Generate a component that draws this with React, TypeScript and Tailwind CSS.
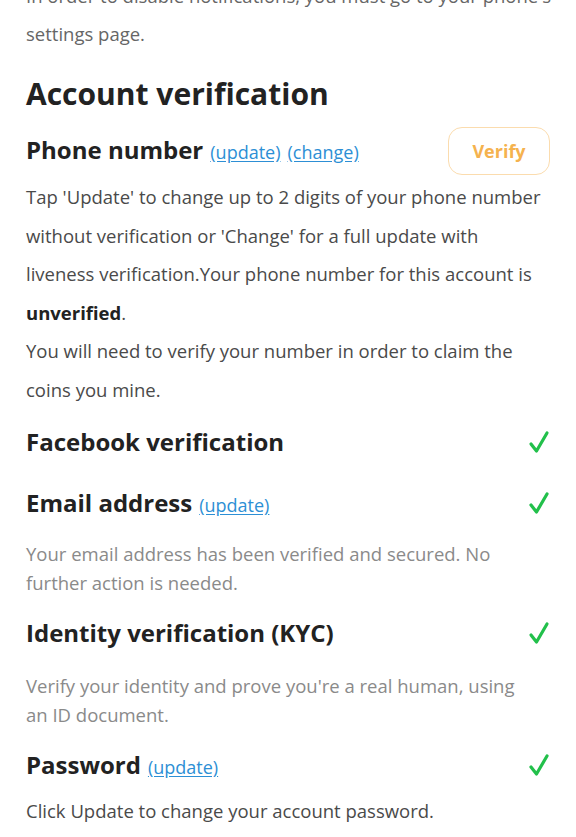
import React from 'react';

const font = { fontFamily: '"Open Sans", "Noto Sans", sans-serif' };

const Check: React.FC = () => (
  <svg width="22" height="24" viewBox="0 0 22 24" className="shrink-0">
    <path d="M3 14 L8.5 21 L19 3" fill="none" stroke="#22c04b" strokeWidth="3.2" strokeLinecap="round" strokeLinejoin="round" />
  </svg>
);

const Link: React.FC<{ children: React.ReactNode }> = ({ children }) => (
  <a href="#" className="text-[18px] font-normal text-[#2d8fd5] underline underline-offset-2">
    {children}
  </a>
);

const App: React.FC = () => {
  return (
    <div className="bg-white w-[576px] h-[837px] overflow-hidden" style={font}>
      <div className="px-[26px]">
        {/* intro paragraph, cut off at top */}
        <p className="mt-[-23px] text-[18.5px] leading-[38px] text-[#666] whitespace-nowrap">
          In order to disable notifications, you must go to your phone's
          <br />
          settings page.
        </p>

        <h1 className="mt-[21px] text-[30px] leading-[40px] font-bold text-[#222]">Account verification</h1>

        {/* Phone number */}
        <div className="mt-[13px] flex items-center justify-between">
          <div className="flex items-baseline gap-[7px] -mt-[3px]">
            <span className="text-[24px] leading-[32px] font-bold text-[#222]">Phone number</span>
            <Link>(update)</Link>
            <Link>(change)</Link>
          </div>
          <button className="w-[102px] h-[48px] rounded-[14px] border border-[#fbdcae] text-[18px] font-bold text-[#f5b24e]">
            Verify
          </button>
        </div>
        <div className="mt-[3px] text-[18.5px] leading-[38.5px] text-[#4a4a4a]">
          <p>
            Tap 'Update' to change up to 2 digits of your phone number
            <br />
            without verification or 'Change' for a full update with
            <br />
            liveness verification.Your phone number for this account is
            <br />
            <b className="text-[#222]">unverified</b>.
          </p>
          <p>
            You will need to verify your number in order to claim the
            <br />
            coins you mine.
          </p>
        </div>

        {/* Facebook */}
        <div className="mt-[17px] flex items-center justify-between">
          <span className="text-[24px] leading-[32px] font-bold text-[#222]">Facebook verification</span>
          <Check />
        </div>

        {/* Email */}
        <div className="mt-[29px] flex items-center justify-between">
          <div className="flex items-baseline gap-[7px]">
            <span className="text-[24px] leading-[32px] font-bold text-[#222]">Email address</span>
            <Link>(update)</Link>
          </div>
          <Check />
        </div>
        <p className="mt-[20px] text-[18.5px] leading-[29px] text-[#8a8a8a]">
          Your email address has been verified and secured. No
          <br />
          further action is needed.
        </p>

        {/* KYC */}
        <div className="mt-[20px] flex items-center justify-between">
          <span className="text-[24px] leading-[32px] font-bold text-[#222]">Identity verification (KYC)</span>
          <Check />
        </div>
        <p className="mt-[22px] text-[18.5px] leading-[29px] text-[#8a8a8a]">
          Verify your identity and prove you're a real human, using
          <br />
          an ID document.
        </p>

        {/* Password */}
        <div className="mt-[20px] flex items-center justify-between">
          <div className="flex items-baseline gap-[7px]">
            <span className="text-[24px] leading-[32px] font-bold text-[#222]">Password</span>
            <Link>(update)</Link>
          </div>
          <Check />
        </div>
        <p className="mt-[11px] text-[18.5px] leading-[38px] text-[#4a4a4a]">
          Click Update to change your account password.
        </p>
      </div>
    </div>
  );
};

export default App;
